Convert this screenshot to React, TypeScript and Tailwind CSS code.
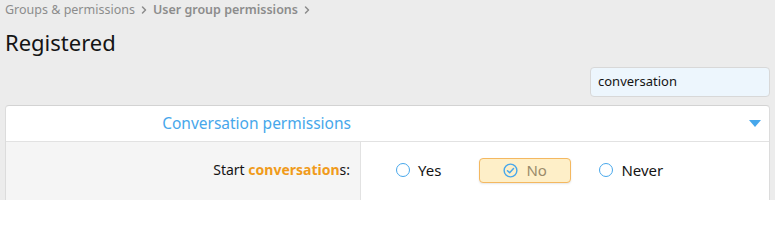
import { ChevronRight } from "lucide-react"

function Radio({ label }: { label: string }) {
  return (
    <label className="flex h-[24px] items-center gap-[8px] text-[15px] text-[#141414]">
      <span className="h-[14px] w-[14px] rounded-full border-[1.5px] border-[#47a7eb] bg-white" />
      {label}
    </label>
  )
}

export default function App() {
  return (
    <div
      className="h-[200px] overflow-hidden bg-[#ececec] px-[5px]"
      style={{ fontFamily: '"Noto Sans", "Open Sans", sans-serif' }}
    >
      <div className="flex h-[20px] items-center text-[12.5px] text-[#8c8c8c]">
        <span>Groups &amp; permissions</span>
        <ChevronRight className="mx-[3px] h-[12px] w-[12px]" strokeWidth={3} />
        <span className="font-semibold">User group permissions</span>
        <ChevronRight className="mx-[3px] h-[12px] w-[12px]" strokeWidth={3} />
      </div>

      <h1 className="mt-[5px] text-[22px] leading-[34px] text-[#141414]">Registered</h1>

      <div className="mt-[8px] flex justify-end">
        <div className="flex h-[30px] w-[180px] items-center rounded-[4px] border border-[#d8d8d8] bg-[#edf6fd] px-[7px] text-[13px] text-[#141414]">
          conversation
        </div>
      </div>

      <div className="mt-[8px] rounded-t-[4px] border border-[#dcdcdc] border-t-[#d3d3d3] bg-white">
        <div className="flex h-[36px] items-center border-b border-[#e2e2e2]">
          <div className="w-[355px] pr-[10px] text-right text-[15.5px] text-[#47a7eb]">Conversation permissions</div>
          <div className="flex flex-1 justify-end pr-[8px]">
            <svg width="12" height="7" viewBox="0 0 12 7">
              <path d="M0 0 H12 L6 7 Z" fill="#47a7eb" />
            </svg>
          </div>
        </div>
        <div className="flex h-[60px]">
          <div className="w-[355px] border-r border-[#e2e2e2] bg-[#f5f5f5] pr-[10px] pt-[17px] text-right text-[14px] text-[#141414]">
            Start <span className="font-bold text-[#f09b1b]">conversation</span>s:
          </div>
          <div className="flex items-start pl-[35px] pt-[16px]">
            <Radio label="Yes" />
            <label className="ml-[38px] flex h-[25px] w-[92px] items-center gap-[8px] rounded-[4px] border border-[#f4b860] bg-[#feefc8] pl-[23px] text-[15px] text-[#9a8a6a] shadow-[0_1px_2px_rgba(0,0,0,0.1)]">
              <svg width="15" height="15" viewBox="0 0 16 16" fill="none">
                <circle cx="8" cy="8" r="6.8" stroke="#47a7eb" strokeWidth="1.5" />
                <path d="M4.8 8.2 L7.1 10.4 L11.2 5.8" stroke="#47a7eb" strokeWidth="1.6" strokeLinecap="round" strokeLinejoin="round" />
              </svg>
              No
            </label>
            <div className="ml-[28px]">
              <Radio label="Never" />
            </div>
          </div>
        </div>
      </div>
    </div>
  )
}
